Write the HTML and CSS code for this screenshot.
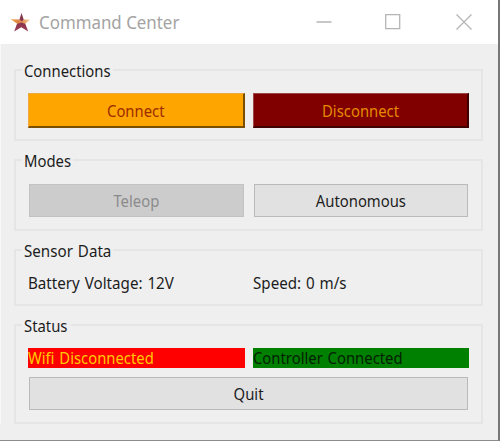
FILE: index.html
```
<!DOCTYPE html>
<html lang="en">
<head>
<meta charset="utf-8">
<title>Command Center</title>
<link rel="stylesheet" href="styles.css">
</head>
<body>
<div class="window">
  <header class="titlebar">
    <svg class="logo" width="22" height="22" viewBox="0 0 22 22">
      <defs>
        <linearGradient id="o" x1="0" x2="1"><stop offset="0" stop-color="#f6a13a"/><stop offset=".4" stop-color="#d9824a"/><stop offset=".7" stop-color="#e8a262"/><stop offset="1" stop-color="#fde6c4"/></linearGradient>
        <linearGradient id="g" x1="0" y1="0" x2="0" y2="1"><stop offset="0" stop-color="#83344f"/><stop offset="1" stop-color="#983a50"/></linearGradient>
      </defs>
      <path fill="url(#g)" d="M11.5 2 L13.7 8.6 L14 10.5 L15.5 13.2 L18.2 20.5 L11.3 16.3 L4.2 20.5 L7 12.8 L9.4 8.8Z"/>
      <path fill="url(#o)" d="M.8 8.2 L9.6 8.6 L12 10.4 L13.6 8.4 H20.6 L15.3 12.7 L11.5 11.4 L7.2 12.8Z"/>
    </svg>
    <h1 class="title"><span class="text">Command Center</span></h1>
    <svg class="controls" width="158" height="18" viewBox="0 0 158 18" fill="none" stroke="#b5b5b5" stroke-width="1.3">
      <path d="M.5 9H15.5M69.7 1.7h14v14h-14zM140.5 1.5l15 15M155.5 1.5l-15 15"/>
    </svg>
  </header>
  <main class="content">
    <section class="group connections">
      <h2 class="legend"><span class="text">Connections</span></h2>
      <div class="row">
        <button class="button raised connect"><span class="text">Connect</span></button>
        <button class="button raised disconnect"><span class="text">Disconnect</span></button>
      </div>
    </section>
    <section class="group modes">
      <h2 class="legend"><span class="text">Modes</span></h2>
      <div class="row">
        <button class="button flat" disabled><span class="text">Teleop</span></button>
        <button class="button flat"><span class="text">Autonomous</span></button>
      </div>
    </section>
    <section class="group sensors">
      <h2 class="legend"><span class="text">Sensor Data</span></h2>
      <div class="row">
        <p class="label"><span class="text">Battery Voltage: 12V</span></p>
        <p class="label"><span class="text">Speed: 0 m/s</span></p>
      </div>
    </section>
    <section class="group status">
      <h2 class="legend"><span class="text">Status</span></h2>
      <div class="row">
        <p class="label wifi"><span class="text">Wifi Disconnected</span></p>
        <p class="label controller"><span class="text">Controller Connected</span></p>
      </div>
      <button class="button flat quit"><span class="text">Quit</span></button>
    </section>
  </main>
</div>
</body>
</html>
```
FILE: styles.css
```
* { box-sizing: border-box; }
body {
  margin: 0;
  font-family: "Noto Sans", "Open Sans", sans-serif;
  font-size: 16.4px;
  line-height: 20px;
  color: #1c1c1c;
}
.window {
  width: 500px;
  height: 441px;
  overflow: hidden;
  background: #efefef;
  border-right: 2px solid #777;
  border-bottom: 1px solid #8c8c8c;
}
.titlebar {
  display: flex;
  align-items: center;
  height: 44px;
  padding: 0 24px 0 10px;
  background: #fff;
}
.title {
  flex: 1;
  margin: 0 0 0 7px;
  font-size: 18px;
  font-weight: 400;
  color: #a3a3a3;
}
.text {
  display: inline-block;
  white-space: nowrap;
  word-spacing: 1px;
  transform: scaleX(.905);
}
.legend .text, .label .text { transform-origin: left; }
.title .text { word-spacing: 0; transform: scaleX(.938); transform-origin: left; }
.content {
  padding: 25px 15px 0 13px;
  border-left: 1px solid #f8f8f8;
}
.group {
  margin-bottom: 18px;
  padding: 0 12px;
  border: 2px solid #e5e5e5;
  border-radius: 1px;
}
.connections, .modes { height: 72px; }
.sensors { height: 57px; }
.status { height: 100px; }
.legend {
  width: 91px;
  height: 20px;
  margin: -10px 0 0 -6px;
  padding: 0 0 0 2px;
  background: #efefef;
  font-size: inherit;
  font-weight: 400;
}
.modes .legend { width: 51px; }
.status .legend { width: 49px; }
.row {
  display: grid;
  grid-template-columns: 217px 216px;
  gap: 8px;
}
.button {
  display: flex;
  align-items: center;
  justify-content: center;
  padding: 0;
  border-radius: 0;
  font: inherit;
  line-height: 20px;
  color: inherit;
}
.raised { height: 35px; margin-top: 12px; padding-top: 2px; }
.connect {
  background: #ffa500;
  border: 1px solid #eda842;
  border-right: 2px solid #7a4f00;
  border-bottom: 2px solid #7a4f00;
  color: #9b2c00;
}
.disconnect {
  background: #800000;
  border: 1px solid #a04848;
  border-right: 2px solid #400000;
  border-bottom: 2px solid #400000;
  color: #e58a00;
}
.flat {
  height: 33px;
  margin: 13px 1px 0;
  padding-top: 1px;
  background: #e1e1e1;
  border: 1px solid #bababa;
}
.flat:disabled {
  background: #ccc;
  border-color: #c2c2c2;
  color: #8b8b8b;
}
.label { height: 20px; margin: 0; }
.sensors .row { margin-top: 12px; }
.sensors .text { transform: scaleX(.925); }
.status .row { margin-top: 12px; }
.wifi { background: #f00; color: #ffc800; }
.controller { background: #008000; color: #052005; }
.quit { width: 439px; margin-top: 9px; }
```
